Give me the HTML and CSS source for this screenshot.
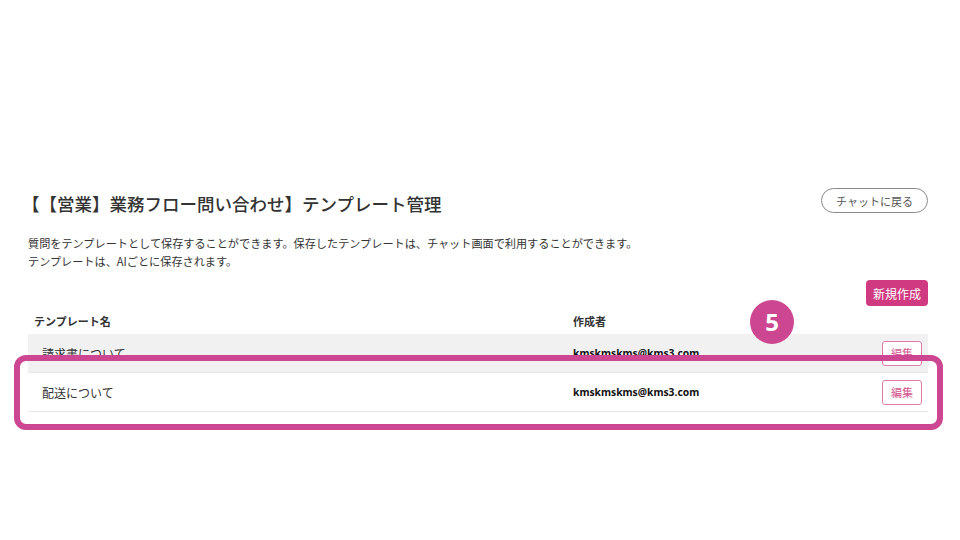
FILE: index.html
```html
<!DOCTYPE html>
<html lang="ja">
<head>
    <meta charset="UTF-8">
    <meta name="viewport" content="width=device-width, initial-scale=1.0">
    <title>テンプレート管理</title>
    <link rel="stylesheet" href="styles.css">
</head>
<body>
    <div class="container">
        <div class="page-header">
            <h1>【【営業】業務フロー問い合わせ】テンプレート管理</h1>
            <button class="back-btn">チャットに戻る</button>
        </div>
        <p class="description">
            質問をテンプレートとして保存することができます。保存したテンプレートは、チャット画面で利用することができます。<br>
            テンプレートは、AIごとに保存されます。
        </p>
        <div class="actions">
            <button class="new-btn">新規作成</button>
        </div>
        <table>
            <colgroup>
                <col class="col-name">
                <col class="col-author">
                <col class="col-action">
            </colgroup>
            <thead>
                <tr>
                    <th>テンプレート名</th>
                    <th>作成者</th>
                    <th></th>
                </tr>
            </thead>
            <tbody>
                <tr class="row-alt">
                    <td>請求書について</td>
                    <td class="author">kmskmskms@kms3.com</td>
                    <td class="action"><button class="edit-btn">編集</button></td>
                </tr>
                <tr>
                    <td>配送について</td>
                    <td class="author">kmskmskms@kms3.com</td>
                    <td class="action"><button class="edit-btn">編集</button></td>
                </tr>
            </tbody>
        </table>

        <!-- annotation overlay -->
        <div class="step-badge">5</div>
        <div class="highlight"></div>
    </div>
</body>
</html>
```

FILE: styles.css
```css
body {
    margin: 0;
    min-height: 540px;
    background-color: #fff;
    font-family: "Noto Sans CJK JP", "Noto Sans", sans-serif;
    color: #333;
}

.container {
    position: relative;
    width: 900px;
    margin-left: 28px;
    padding-top: 188px;
    padding-bottom: 129px;
}

.page-header {
    display: flex;
    justify-content: space-between;
    align-items: flex-start;
}

h1 {
    margin: 4px 0 0 -6px;
    font-size: 17.5px;
    font-weight: 500;
    line-height: 24px;
    color: #333;
    text-spacing-trim: space-all;
}

.back-btn {
    height: 25px;
    padding: 0 14px;
    border: 1px solid #8a8a8a;
    border-radius: 13px;
    background: #fff;
    color: #555;
    font-family: inherit;
    font-size: 11px;
    cursor: pointer;
}

.description {
    margin: 18px 0 0 0;
    font-size: 11.15px;
    line-height: 18px;
    color: #333;
}

.actions {
    display: flex;
    justify-content: flex-end;
    margin-top: 10px;
}

.new-btn {
    height: 26px;
    padding: 0 7px;
    border: none;
    border-radius: 4px;
    background-color: #cf3a80;
    color: #fff;
    font-family: inherit;
    font-size: 12px;
    cursor: pointer;
}

table {
    width: 100%;
    table-layout: fixed;
    border-collapse: collapse;
    margin-top: 2px;
}

.col-name {
    width: 539px;
}

.col-author {
    width: 300px;
}

th {
    height: 26px;
    padding: 0 6px;
    text-align: left;
    font-size: 11px;
    font-weight: 700;
    color: #333;
}

td {
    height: 38px;
    padding: 0 14px;
    font-size: 12px;
    border-bottom: 1px solid #e8e8e8;
}

.row-alt td {
    background-color: #f1f1f1;
}

td.author {
    padding-left: 6px;
    font-family: "Noto Sans", sans-serif;
    font-size: 10.3px;
    font-weight: 700;
    color: #111;
}

td.action {
    padding-right: 6px;
    text-align: right;
}

.edit-btn {
    width: 40px;
    height: 25px;
    padding: 0;
    border: 1px solid #e07aa9;
    border-radius: 3px;
    background: #fff;
    color: #d4558f;
    font-family: inherit;
    font-size: 11px;
    cursor: pointer;
}

.step-badge {
    position: absolute;
    left: 722px;
    top: 300px;
    width: 44px;
    height: 44px;
    border-radius: 50%;
    background-color: #cc4691;
    color: #fff;
    font-family: "Noto Sans", sans-serif;
    font-size: 24px;
    font-weight: 700;
    line-height: 44px;
    text-align: center;
}

.highlight {
    position: absolute;
    left: -14px;
    top: 355px;
    width: 917px;
    height: 63px;
    border: 6px solid #cc4691;
    border-radius: 12px;
}
```
